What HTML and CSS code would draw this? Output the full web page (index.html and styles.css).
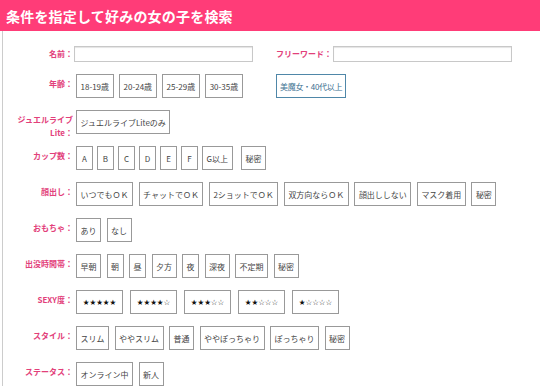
FILE: index.html
```html
<!DOCTYPE html>
<html lang="ja">
<head>
    <meta charset="UTF-8">
    <meta name="viewport" content="width=device-width, initial-scale=1.0">
    <title>条件を指定して好みの女の子を検索</title>
    <link rel="stylesheet" href="styles.css">
</head>
<body>
    <!-- ヘッダー -->
    <header class="search-head">
        <h1>条件を指定して好みの女の子を検索</h1>
    </header>

    <div class="search-box">
        <!-- 名前 / フリーワード -->
        <div class="pair">
            <div class="row row-input">
                <div class="label">名前：</div>
                <input class="text-input" type="text">
            </div>
            <div class="row row-input">
                <div class="label label-free">フリーワード：</div>
                <input class="text-input" type="text">
            </div>
        </div>

        <!-- 年齢 -->
        <div class="pair">
            <div class="row">
                <div class="label">年齢：</div>
                <div class="options">
                    <span class="opt">18-19歳</span>
                    <span class="opt">20-24歳</span>
                    <span class="opt">25-29歳</span>
                    <span class="opt">30-35歳</span>
                </div>
            </div>
            <div class="row">
                <div class="options">
                    <span class="opt opt-blue">美魔女・40代以上</span>
                </div>
            </div>
        </div>

        <div class="row">
            <div class="label">ジュエルライブ<br>Lite：</div>
            <div class="options">
                <span class="opt">ジュエルライブLiteのみ</span>
            </div>
        </div>

        <div class="row">
            <div class="label">カップ数：</div>
            <div class="options">
                <span class="opt opt-small">A</span>
                <span class="opt opt-small">B</span>
                <span class="opt opt-small">C</span>
                <span class="opt opt-small">D</span>
                <span class="opt opt-small">E</span>
                <span class="opt opt-small">F</span>
                <span class="opt">G以上</span>
                <span class="opt opt-far">秘密</span>
            </div>
        </div>

        <div class="row">
            <div class="label">顔出し：</div>
            <div class="options">
                <span class="opt">いつでもＯＫ</span>
                <span class="opt">チャットでＯＫ</span>
                <span class="opt">2ショットでＯＫ</span>
                <span class="opt">双方向ならＯＫ</span>
                <span class="opt">顔出ししない</span>
                <span class="opt">マスク着用</span>
                <span class="opt">秘密</span>
            </div>
        </div>

        <div class="row">
            <div class="label">おもちゃ：</div>
            <div class="options">
                <span class="opt">あり</span>
                <span class="opt">なし</span>
            </div>
        </div>

        <div class="row">
            <div class="label">出没時間帯：</div>
            <div class="options">
                <span class="opt">早朝</span>
                <span class="opt">朝</span>
                <span class="opt">昼</span>
                <span class="opt">夕方</span>
                <span class="opt">夜</span>
                <span class="opt">深夜</span>
                <span class="opt">不定期</span>
                <span class="opt">秘密</span>
            </div>
        </div>

        <div class="row">
            <div class="label">SEXY度：</div>
            <div class="options">
                <span class="opt opt-star">★★★★★</span>
                <span class="opt opt-star">★★★★☆</span>
                <span class="opt opt-star">★★★☆☆</span>
                <span class="opt opt-star">★★☆☆☆</span>
                <span class="opt opt-star">★☆☆☆☆</span>
            </div>
        </div>

        <div class="row">
            <div class="label">スタイル：</div>
            <div class="options">
                <span class="opt">スリム</span>
                <span class="opt">ややスリム</span>
                <span class="opt">普通</span>
                <span class="opt">ややぽっちゃり</span>
                <span class="opt">ぽっちゃり</span>
                <span class="opt">秘密</span>
            </div>
        </div>

        <div class="row">
            <div class="label">ステータス：</div>
            <div class="options">
                <span class="opt">オンライン中</span>
                <span class="opt">新人</span>
            </div>
        </div>
    </div>
</body>
</html>
```

FILE: styles.css
```css
/* 基本 */
body, html {
    margin: 0;
    padding: 0;
    background: #fff;
    font-family: "Noto Sans CJK JP", "Noto Sans", sans-serif;
    color: #333;
}

/* ヘッダー */
.search-head {
    background: #ff3c78;
    height: 31px;
    display: flex;
    align-items: center;
    padding-left: 6px;
}

.search-head h1 {
    margin: 0;
    font-size: 14px;
    font-weight: bold;
    color: #fff;
    letter-spacing: 0.2px;
}

/* 検索ボックス */
.search-box {
    margin-left: 2px;
    border-left: 1px solid #ccc;
    padding-top: 15px;
    display: flex;
    flex-direction: column;
    gap: 12px;
}

.pair {
    display: grid;
    grid-template-columns: 273px 1fr;
}

.row {
    display: flex;
    align-items: flex-start;
    height: 24px;
}

.row-input {
    height: 16px;
}

.label {
    width: 70px;
    flex-shrink: 0;
    text-align: right;
    font-size: 8px;
    font-weight: bold;
    line-height: 13px;
    color: #e2407a;
    padding-top: 3px;
    padding-right: 3px;
}

.label-free {
    width: auto;
    padding-top: 1px;
    padding-right: 1px;
}

.row-input .label {
    padding-top: 1px;
    padding-right: 1px;
}

.text-input {
    width: 179px;
    height: 16px;
    box-sizing: border-box;
    margin: 0;
    padding: 0;
    border: 1px solid #c8c8c8;
    box-shadow: inset 0 1px 1px #e4e4e4;
}

/* 選択肢 */
.options {
    display: flex;
    flex-wrap: wrap;
    gap: 5.5px;
}

.opt {
    display: inline-flex;
    align-items: center;
    justify-content: center;
    height: 22px;
    padding: 0 3.5px;
    border: 1px solid #999;
    background: #fff;
    font-size: 8px;
    color: #444;
    white-space: nowrap;
}

.opt-small {
    width: 8px;
    margin-right: -1.5px;
}

.opt-far {
    margin-left: 3px;
}

.opt-star {
    width: 38px;
    margin-right: 1.5px;
    font-family: "DejaVu Sans", sans-serif;
    font-size: 7.5px;
    color: #111;
}

.opt-blue {
    border-color: #4f87a8;
    color: #3b6f90;
    padding: 0 3px;
    letter-spacing: -0.3px;
}
```
